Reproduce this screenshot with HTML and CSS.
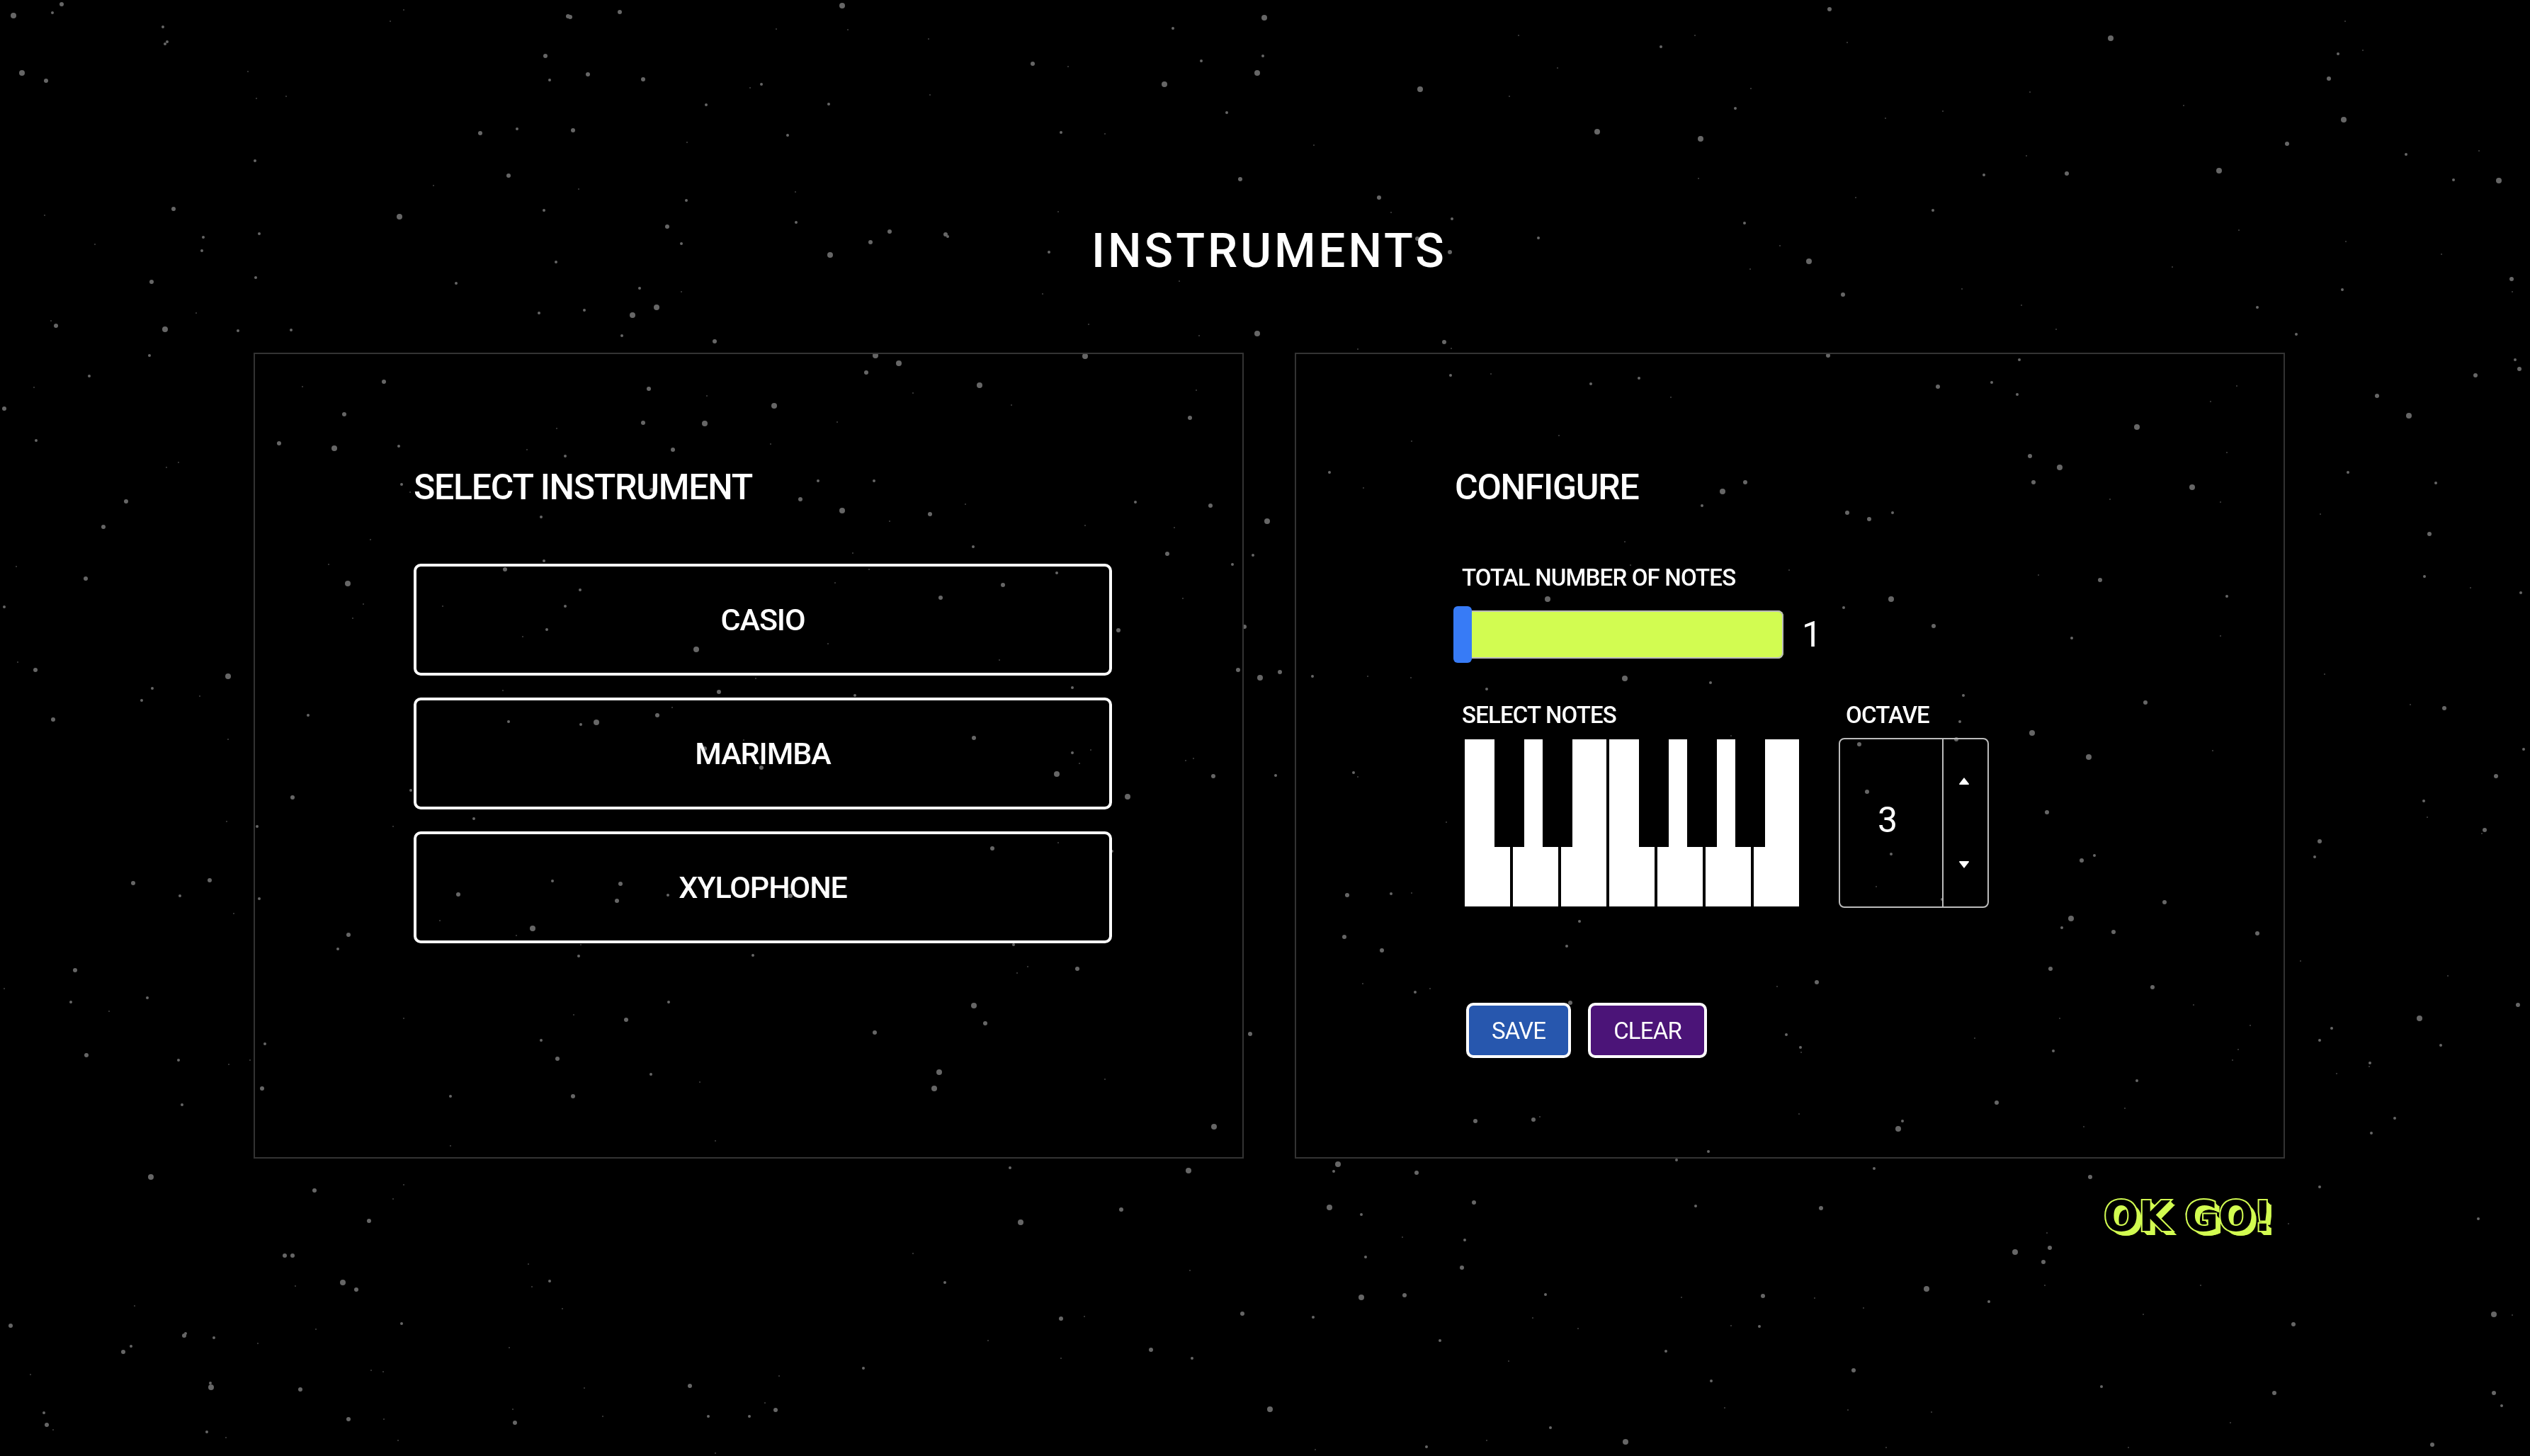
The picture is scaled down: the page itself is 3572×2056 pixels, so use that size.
FILE: index.html
```html
<!DOCTYPE html>
<html lang="en">
<head>
<meta charset="utf-8">
<meta name="viewport" content="width=device-width, initial-scale=1">
<title>Instruments</title>
<link rel="stylesheet" href="styles.css">
</head>
<body>
<svg class="sky" id="sky" viewBox="0 0 3572 2056" preserveAspectRatio="xMidYMid slice" aria-hidden="true"></svg>

<main class="page">
  <h1 class="title">INSTRUMENTS</h1>

  <div class="panels">
    <section class="panel">
      <h2 class="panel-title">SELECT INSTRUMENT</h2>
      <div class="instrument-list">
        <button class="instrument" type="button">CASIO</button>
        <button class="instrument" type="button">MARIMBA</button>
        <button class="instrument" type="button">XYLOPHONE</button>
      </div>
    </section>

    <section class="panel">
      <h2 class="panel-title">CONFIGURE</h2>
      <form class="config">
        <label class="field-label" for="note-count">TOTAL NUMBER OF NOTES</label>
        <div class="count-row">
          <input class="slider" id="note-count" type="range" min="1" max="8" value="1">
          <output class="count" for="note-count">1</output>
        </div>

        <div class="notes-row">
          <div class="notes">
            <span class="field-label" id="notes-label">SELECT NOTES</span>
            <div class="piano" role="group" aria-labelledby="notes-label">
              <button class="key" type="button" aria-label="C"></button>
              <div class="key-pair"><button class="key" type="button" aria-label="D"></button><button class="key-black" type="button" aria-label="C sharp"></button></div>
              <div class="key-pair"><button class="key" type="button" aria-label="E"></button><button class="key-black" type="button" aria-label="D sharp"></button></div>
              <button class="key" type="button" aria-label="F"></button>
              <div class="key-pair"><button class="key" type="button" aria-label="G"></button><button class="key-black" type="button" aria-label="F sharp"></button></div>
              <div class="key-pair"><button class="key" type="button" aria-label="A"></button><button class="key-black" type="button" aria-label="G sharp"></button></div>
              <div class="key-pair"><button class="key" type="button" aria-label="B"></button><button class="key-black" type="button" aria-label="A sharp"></button></div>
            </div>
          </div>
          <div class="octave">
            <label class="field-label" for="octave">OCTAVE</label>
            <div class="stepper">
              <input class="stepper-value" id="octave" type="number" min="1" max="7" value="3">
              <div class="stepper-arrows">
                <button class="arrow" type="button" aria-label="Octave up"><svg width="14" height="10" viewBox="0 0 14 10"><path d="M7 0 L14 9 Q14 10 13 10 H1 Q0 10 0 9 Z"/></svg></button>
                <button class="arrow" type="button" aria-label="Octave down"><svg width="14" height="10" viewBox="0 0 14 10"><path d="M7 10 L14 1 Q14 0 13 0 H1 Q0 0 0 1 Z"/></svg></button>
              </div>
            </div>
          </div>
        </div>

        <div class="actions">
          <button class="action action-save" type="button">SAVE</button>
          <button class="action action-clear" type="reset">CLEAR</button>
        </div>
      </form>
    </section>
  </div>

  <div class="footer">
    <button class="go" type="button">OK GO!</button>
  </div>
</main>
<script src="stars.js"></script>
</body>
</html>
```
FILE: styles.css
```css
* { box-sizing: border-box; }

:root {
  --lime: #d2fc51;
  --line: #333;
  --field: #bbb;
  --tight: -0.025em;
}

body {
  margin: 0;
  min-height: 100vh;
  background: #000;
  color: #fff;
  font-family: Roboto, "Liberation Sans", sans-serif;
  font-weight: 500;
}

button, input {
  margin: 0;
  padding: 0;
  font: inherit;
  color: inherit;
  letter-spacing: inherit;
  cursor: pointer;
}

.sky {
  position: fixed;
  inset: 0;
  width: 100%;
  height: 100%;
  z-index: -1;
  fill: #666;
}

.star-faint { fill: #444; }

.page { padding: 314px 346px 60px 358px; }

.title {
  margin: 0 0 104px;
  font-size: 67px;
  line-height: 80px;
  font-weight: 500;
  letter-spacing: 4px;
  text-align: center;
}

.panels {
  display: grid;
  grid-template-columns: 1fr 1fr;
  gap: 72px;
}

.panel {
  padding: 158px 184px 140px 224px;
  border: 2px solid var(--line);
}

.panel-title {
  margin: 0 0 78px;
  font-size: 50px;
  line-height: 60px;
  font-weight: 500;
  letter-spacing: var(--tight);
}

.instrument-list {
  display: flex;
  flex-direction: column;
  gap: 31px;
}

.instrument {
  height: 158px;
  border: 4px solid #fff;
  border-radius: 10px;
  background: transparent;
  font-size: 43px;
  letter-spacing: var(--tight);
}

.config {
  display: flex;
  flex-direction: column;
}

.field-label {
  padding-left: 10px;
  font-size: 33px;
  line-height: 40px;
  letter-spacing: var(--tight);
}

.count-row {
  display: flex;
  align-items: center;
  gap: 26px;
  margin: 20px 0 54px -2px;
}

.slider {
  width: 466px;
  height: 80px;
  background: transparent;
  appearance: none;
}

.slider::-webkit-slider-runnable-track {
  height: 68px;
  border-radius: 8px;
  background: var(--lime);
  box-shadow: inset 0 0 0 2px var(--field);
}

.slider::-webkit-slider-thumb {
  width: 26px;
  height: 80px;
  margin-top: -6px;
  border-radius: 6px;
  background: #377bf6;
  appearance: none;
}

.count {
  font-size: 50px;
  line-height: 60px;
  font-weight: 400;
}

.notes-row {
  display: flex;
  gap: 56px;
}

.notes, .octave {
  display: flex;
  flex-direction: column;
  gap: 12px;
}

.piano {
  display: flex;
  gap: 4px;
  margin: 2px 0 2px 14px;
}

.key-pair {
  position: relative;
  display: flex;
}

.key {
  width: 64px;
  height: 236px;
  border: 0;
  background: #fff;
}

/* Black keys straddle the seam on the left of their white key. */
.key-black {
  position: absolute;
  top: 0;
  left: -26px;
  width: 42px;
  height: 152px;
  border: 0;
  background: #000;
}

.stepper {
  display: flex;
  width: 212px;
  height: 240px;
  border: 2px solid var(--field);
  border-radius: 8px;
}

.stepper-value {
  flex: 1;
  min-width: 0;
  padding: 0 10px 8px 0;
  border: 0;
  background: transparent;
  font-size: 50px;
  font-weight: 400;
  text-align: center;
  appearance: textfield;
}

.stepper-value::-webkit-inner-spin-button { appearance: none; display: none; }

.stepper-arrows {
  display: flex;
  flex-direction: column;
  width: 64px;
  border-left: 2px solid var(--field);
}

.arrow {
  display: flex;
  flex: 1;
  align-items: center;
  justify-content: center;
  padding-right: 4px;
  border: 0;
  background: transparent;
  fill: #fff;
}

.actions {
  display: flex;
  gap: 24px;
  margin: 134px 0 0 16px;
}

.action {
  height: 78px;
  padding: 0 32px;
  border: 4px solid #fff;
  border-radius: 10px;
  font-size: 33px;
  font-weight: 400;
  letter-spacing: var(--tight);
}

.action-save { background: #2757ae; }
.action-clear { background: #4b1478; }

.footer {
  display: flex;
  justify-content: flex-end;
  margin-top: 50px;
  padding-right: 18px;
}

.go {
  border: 0;
  background: transparent;
  color: #000;
  font: 700 58px/64px "DejaVu Sans", sans-serif;
  -webkit-text-stroke: 4px var(--lime);
  paint-order: stroke fill;
  text-shadow: 1px 1px var(--lime), 2px 2px var(--lime), 3px 3px var(--lime), 4px 4px var(--lime), 5px 5px var(--lime), 6px 6px var(--lime), 7px 6px var(--lime);
}
```
FILE: stars.js
```js
// Star field. Each patch of sky has its own origin and scale;
// stars are listed as x, y, radius inside the patch.
const patches = [
  { x: 0, y: 0, sx: 1.139, sy: 0.3333, stars: [
    76,17,3, 65,53,2, 17,66,4, 202,114,2, 207,176,2, 205,186,2, 500,43,1, 484,91,1, 704,70,3, 707,72,3, 768,50,3,
    1044,24,4, 962,122,1, 1051,127,1, 1454,119,2, 1567,76,4, 676,237,3, 27,308,4, 57,342,3, 307,302,1, 729,315,3,
    681,339,2, 797,335,3, 944,358,2, 930,371,1, 1280,270,3, 1324,281,1, 1489,257,2, 1443,358,4, 1558,310,4, 1565,238,2,
    318,416,1, 355,408,1, 875,443,2, 1027,442,2, 1153,403,1, 1521,477,2, 595,564,3, 641,546,2, 710,553,3, 976,572,2,
    1315,561,2, 1370,566,1, 316,681,2, 630,744,3, 1537,760,3, 717,801,1, 537,786,1, 986,814,1, 851,849,2, 215,885,3,
    495,917,4, 674,892,2, 827,961,3, 987,941,2, 1103,981,3, 1172,992,3, 1175,1002,2, 1079,1027,3, 1029,1079,4,
    1300,1069,2, 321,990,2, 252,1006,2, 118,1036,1, 250,1063,2, 845,1033,2, 689,1110,2, 188,1194,3, 317,1176,2,
    565,1199,2, 793,1221,2, 845,1236,1, 814,1302,4, 784,1334,4, 724,1314,2, 668,1327,2, 243,1326,1, 63,1359,1,
    69,1379,3, 205,1395,4, 295,1401,2, 361,1398,2, 771,1421,2, 886,1446,3, 1462,1192,1, 1292,1246,1, 1349,1375,1,
    1486,1422,1, 1558,1413,4, 1151,164,1, 55,913,1, 852,603,1, 1312,897,1
  ] },
  { x: 0, y: 500, sx: 1.139, sy: 0.3367, stars: [
    185,7,2, 1085,5,4, 1114,38,4, 1074,76,3, 1345,8,4, 111,93,2, 42,141,1, 375,136,1, 476,115,3, 804,146,3, 876,176,1,
    1214,130,4, 1132,163,1, 5,228,3, 427,253,3, 960,216,4, 1254,214,1, 1475,267,3, 797,288,3, 874,290,4, 1038,286,1,
    690,311,1, 45,362,2, 346,373,3, 414,395,4, 494,386,2, 834,400,3, 701,428,2, 221,454,1, 206,476,1, 498,546,2,
    508,578,1, 1014,532,2, 1083,533,2, 808,571,3, 156,618,3, 992,608,3, 1044,656,4, 1153,670,3, 1197,629,1,
    1407,621,2, 1500,637,3, 128,725,3, 671,684,2, 1345,718,1, 1206,807,2, 1447,839,3, 1553,844,2, 1528,883,2,
    459,779,1, 674,866,2, 626,904,3, 1057,836,1, 1077,902,1, 20,892,1, 106,942,3, 407,882,1, 431,963,4, 719,989,2,
    1035,959,1, 1310,919,2, 1243,969,3, 1166,1021,3, 1466,1025,1, 5,1060,2, 450,1048,1, 701,1057,2, 549,1058,1,
    678,1155,2, 648,1184,1, 1386,1159,3, 1543,1142,3, 863,1238,4, 1026,1216,1, 1239,1284,1, 22,1292,1, 44,1325,3,
    283,1350,4, 1535,1325,3, 1562,1358,4, 189,1402,2, 1329,1398,2, 891,1416,3, 1060,1432,2, 248,1435,1, 176,1451,2,
    66,1532,3, 382,1514,2, 833,1482,1, 815,1514,3, 739,1544,4, 720,1553,2, 630,1540,2, 1483,151,1, 1103,700,1,
    955,378,1, 653,402,1, 437,1108,1, 937,1360,1, 1456,728,1, 623,1410,1
  ] },
  { x: 1786, y: 0, sx: 1.139, sy: 0.6556, stars: [
    700,20,3, 491,101,2, 192,192,4, 363,147,1, 303,207,1, 602,190,1, 583,233,2, 722,91,1, 1048,82,4, 1339,45,1,
    1330,116,2, 1361,108,1, 1319,170,3, 412,284,4, 540,299,4, 769,255,1, 840,239,1, 948,198,1, 1139,228,1,
    1337,258,4, 1267,309,3, 1414,333,2, 1473,388,2, 1529,389,4, 1183,367,4, 994,373,3, 891,377,2, 944,335,1,
    537,385,1, 61,313,1, 141,426,3, 156,457,1, 232,472,2, 189,514,3, 229,543,3, 339,512,2, 594,481,2, 732,425,1,
    828,453,2, 638,529,1, 674,563,4, 601,580,1, 716,635,3, 864,623,1, 1125,575,1, 1340,520,1, 1458,548,1, 1207,495,1,
    1545,601,3, 1546,628,1, 1335,624,2, 1230,662,2, 938,657,1, 1278,720,2, 981,709,1, 222,737,3, 231,751,1, 115,752,1,
    698,766,3, 935,775,2, 230,809,2, 280,806,1, 404,827,2, 464,814,2, 503,856,1, 834,833,3, 901,823,2, 932,850,2,
    1550,775,2, 1555,794,3, 1500,809,3, 1378,852,3, 1418,895,4, 1081,920,4, 1172,865,1, 1205,832,1, 364,938,1,
    182,951,1, 948,982,3, 985,1006,4, 953,1038,3, 80,1018,2, 122,1051,1, 288,1062,3, 595,1038,3, 567,1058,4,
    542,1089,2, 1149,1050,4, 1342,1017,2, 1451,1040,2, 1047,1075,1, 1184,1082,1, 3,1123,4, 722,1104,3, 749,1118,3,
    778,1105,2, 1308,1108,1, 1443,1150,3, 446,1167,1, 453,1217,1, 650,1228,1, 959,1238,1, 1035,1249,3, 1437,1242,2,
    1494,1266,1, 1192,1284,2, 1557,1276,2, 350,1290,4, 776,1290,4, 717,1308,2, 829,1349,3, 1000,1375,2, 1184,1369,1,
    18,1448,3, 59,1457,2, 127,1456,1, 181,1459,1, 275,1484,2, 446,1461,4, 552,1471,2, 866,1498,2, 1091,1513,3,
    1313,1452,1, 1462,1526,3, 861,1555,2, 1420,1518,1, 1192,975,1, 1505,325,1, 314,77,1, 533,76,1
  ] },
  { x: 0, y: 1028, sx: 1.139, sy: 0.6556, stars: [
    1207,21,3, 1329,53,2, 1352,47,1, 1338,76,1, 1310,99,4, 1504,103,3, 1398,148,4, 1470,70,1, 1479,65,1, 944,86,3,
    922,26,1, 874,44,3, 283,25,1, 363,149,3, 509,134,2, 319,212,2, 487,212,1, 587,196,2, 281,202,1, 1230,259,3,
    1312,247,1, 1378,265,2, 165,334,3, 260,328,3, 223,361,2, 321,368,2, 568,359,3, 685,330,2, 769,336,3, 765,372,3,
    828,360,2, 980,361,3, 660,432,4, 640,447,1, 545,415,1, 290,399,1, 432,446,3, 419,476,2, 93,521,3, 5,562,1,
    88,590,2, 183,581,2, 135,610,1, 717,491,2, 720,467,1, 933,489,2, 1256,467,2, 1335,519,3, 1274,514,1, 1261,528,1,
    1207,598,4, 1221,636,3, 829,590,2, 711,617,1, 776,629,3, 1084,656,3, 1550,659,3, 500,626,1, 671,672,2, 691,712,3,
    328,681,2, 107,704,3, 221,715,2, 284,725,1, 310,716,1, 325,776,3, 226,811,2, 807,746,2, 867,762,1, 1164,741,4,
    1158,776,4, 1370,756,1, 558,793,2, 710,793,3, 1505,859,4, 887,889,1, 558,900,1, 1252,947,2, 1473,953,4,
    187,967,4, 390,996,3, 500,984,1, 487,1014,1, 457,1061,3, 1390,1037,3, 1265,1065,4, 353,1136,3, 363,1137,3,
    425,1194,4, 442,1210,3, 366,1202,1, 655,1154,1, 681,1192,2, 659,1203,1, 1132,1132,1, 1171,1194,2, 1475,1169,1,
    167,1245,1, 13,1287,3, 697,1251,1, 1315,1272,3, 1540,1262,3, 1344,1268,1, 230,1304,2, 228,1308,3, 265,1313,2,
    392,1295,1, 498,1283,2, 320,1326,1, 162,1331,2, 153,1344,3, 631,1335,1, 1225,1320,1, 1427,1339,3, 1478,1357,2,
    1070,1379,2, 1315,1358,1, 38,1392,1, 261,1411,2, 262,1420,4, 372,1425,3, 460,1384,1, 475,1387,1, 855,1417,3,
    966,1395,1, 724,1421,1, 948,1454,1, 961,1469,3, 929,1483,2, 878,1483,2, 747,1482,1, 636,1468,1, 638,1497,3,
    54,1475,2, 58,1501,3, 66,1511,1, 432,1489,3, 476,1488,1, 256,1516,2, 280,1529,1, 493,1534,1, 887,1562,1
  ] },
  { x: 1786, y: 1028, sx: 1.139, sy: 0.6556, stars: [
    951,11,4, 737,35,3, 857,24,3, 578,17,1, 1021,63,4, 1560,45,2, 1526,104,3, 1175,49,1, 13,102,2, 110,96,2, 115,106,1,
    746,138,3, 969,182,3, 1436,157,2, 1441,192,1, 1512,219,3, 1508,228,1, 225,203,1, 776,272,2, 1307,244,3,
    1301,277,2, 1028,275,2, 1012,285,3, 758,341,1, 839,369,2, 102,360,3, 156,357,2, 182,356,1, 1115,375,3,
    999,410,4, 988,430,2, 1052,440,3, 1230,443,3, 98,450,3, 390,417,2, 374,470,2, 145,479,3, 974,519,3, 1100,559,3,
    1284,502,1, 1466,534,1, 186,569,2, 205,562,1, 121,550,1, 684,547,3, 635,556,1, 378,592,3, 646,661,2, 1151,597,1,
    985,626,1, 1553,596,3, 1431,625,4, 1322,646,2, 1307,672,2, 1457,683,2, 1221,640,1, 977,695,2, 880,668,1,
    664,688,2, 665,699,1, 1206,693,1, 1199,716,1, 1370,721,2, 1369,729,1, 1081,760,2, 1328,744,1, 907,807,3,
    1066,819,1, 261,846,3, 333,843,3, 341,838,1, 790,846,2, 785,863,4, 662,832,1, 1015,858,1, 1400,840,2, 1371,872,2,
    550,912,2, 510,930,2, 90,939,4, 85,955,2, 188,958,3, 755,948,2, 1023,967,3, 1307,988,2, 259,1022,3, 80,1033,4,
    119,1048,2, 534,1030,2, 689,1034,3, 1504,1057,2, 1143,1047,3, 170,1096,1, 248,1103,2, 969,1087,1, 125,1139,2,
    244,1163,3, 973,1119,3, 930,1128,4, 965,1150,3, 820,1208,4, 119,1226,4, 173,1222,3, 348,1221,2, 516,1227,1,
    617,1223,3, 681,1228,1, 742,1249,1, 967,1200,1, 1160,1200,1, 897,1235,2, 60,1269,2, 332,1271,1, 388,1294,1,
    578,1288,1, 613,1289,2, 1089,1263,1, 1275,1285,3, 1523,1263,4, 1546,1265,1, 217,1320,2, 497,1343,2, 730,1383,3,
    302,1364,1, 553,1407,2, 1037,1418,2, 1251,1433,3, 1523,1432,3, 1533,1460,2, 6,1468,4, 570,1465,1, 723,1469,1,
    826,1474,1, 354,1507,2, 275,1534,1, 447,1538,4, 200,1548,2, 62,1554,1, 770,1549,1, 1070,1550,1, 1197,1497,1,
    1447,1543,3, 1269,1068,1
  ] }
];

const sky = document.getElementById("sky");
for (const patch of patches) {
  for (let i = 0; i < patch.stars.length; i += 3) {
    const star = document.createElementNS("http://www.w3.org/2000/svg", "circle");
    const size = patch.stars[i + 2];
    star.setAttribute("cx", Math.round(patch.x + patch.stars[i] * patch.sx));
    star.setAttribute("cy", Math.round(patch.y + patch.stars[i + 1] * patch.sy));
    star.setAttribute("r", size);
    if (size === 1) star.setAttribute("class", "star-faint");
    sky.append(star);
  }
}
```
